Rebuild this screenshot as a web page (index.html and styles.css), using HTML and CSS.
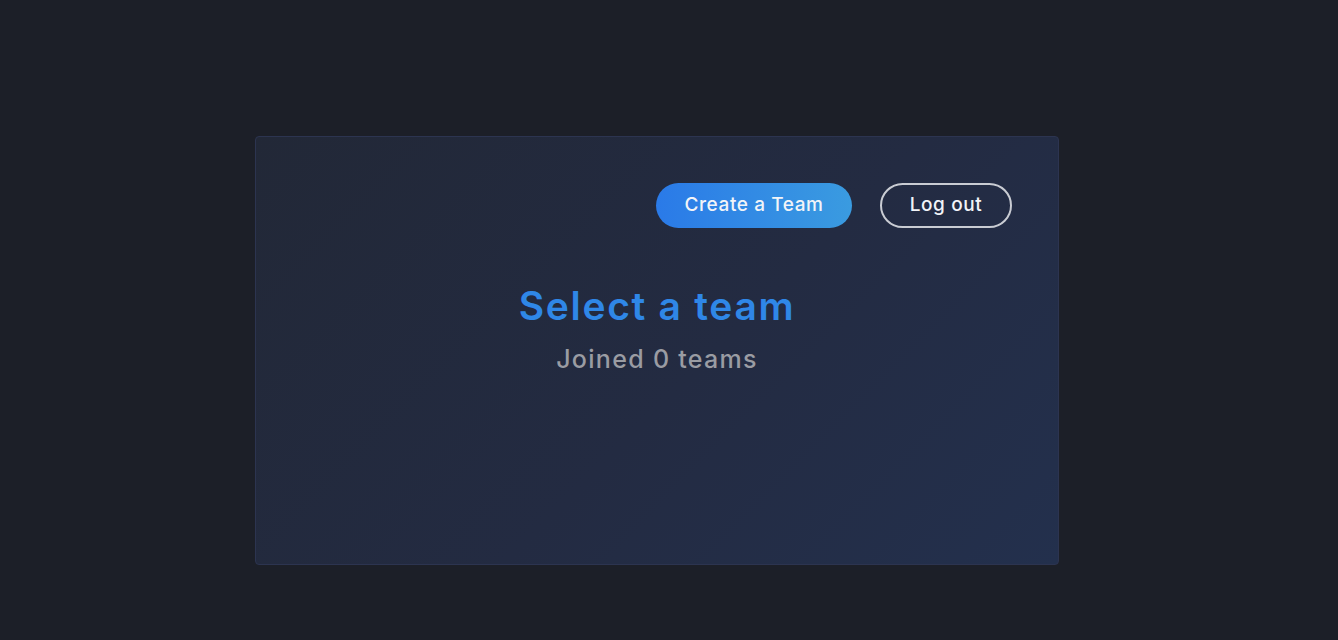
FILE: index.html
```html
<!DOCTYPE html>
<html>
<head>
<meta charset="utf-8">
<link rel="stylesheet" href="styles.css">
</head>
<body>
<div class="page">
  <div class="card">
    <div class="actions">
      <button class="btn btn-primary">Create a Team</button>
      <button class="btn btn-outline">Log out</button>
    </div>
    <h1 class="title">Select a team</h1>
    <p class="subtitle">Joined 0 teams</p>
  </div>
</div>
</body>
</html>
```
FILE: styles.css
```css
html, body {
  margin: 0;
  padding: 0;
  background: #1c1f28;
  font-family: Inter, "Open Sans", "Liberation Sans", sans-serif;
}
.page {
  height: 640px;
  display: flex;
  justify-content: flex-start;
  padding-top: 136px;
  padding-left: 255px;
  box-sizing: border-box;
}
.card {
  width: 804px;
  height: 429px;
  box-sizing: border-box;
  border: 1px solid #2c3450;
  border-radius: 4px;
  background: linear-gradient(135deg, #222837 0%, #232b42 55%, #23304d 100%);
  padding: 46px 46px 0 46px;
  display: flex;
  flex-direction: column;
  align-items: center;
}
.actions {
  align-self: stretch;
  display: flex;
  justify-content: flex-end;
  gap: 28px;
}
.btn {
  height: 45px;
  border-radius: 23px;
  font-family: inherit;
  font-size: 19px;
  font-weight: 500;
  color: #f2f4f8;
  letter-spacing: 0.6px;
  cursor: pointer;
  padding: 0;
  padding-bottom: 2px;
}
.btn-primary {
  width: 196px;
  border: none;
  background: linear-gradient(90deg, #2a7ae8 0%, #3a9be0 100%);
}
.btn-outline {
  width: 132px;
  border: 2px solid #c9ccd3;
  background: transparent;
}
.title {
  margin: 55px 0 0 0;
  font-size: 39px;
  font-weight: 600;
  color: #2f87e7;
  line-height: 46px;
  letter-spacing: 1.7px;
}
.subtitle {
  margin: 15px 0 0 0;
  font-size: 25px;
  line-height: 30px;
  color: #9a9ca3;
  font-weight: 500;
  letter-spacing: 1.3px;
}
```
